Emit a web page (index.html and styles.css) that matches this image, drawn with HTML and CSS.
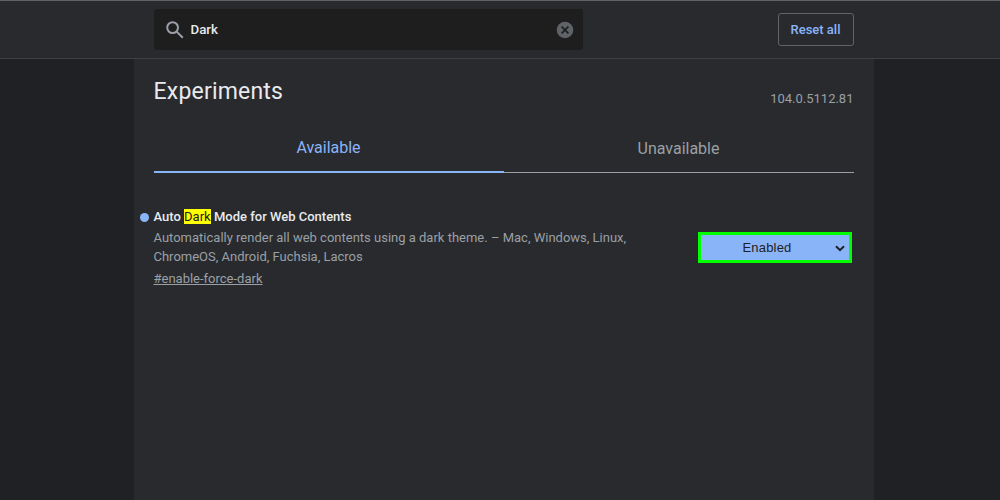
FILE: index.html
```html
<!DOCTYPE html>
<html lang="en">
<head>
    <meta charset="utf-8">
    <title>Experiments</title>
    <meta name="viewport" content="width=device-width, initial-scale=1.0">
    <link rel="stylesheet" href="styles.css">
</head>
<body>
    <header>
        <div class="toolbar">
            <div class="search-box">
                <svg class="search-icon" viewBox="0 0 18 18">
                    <circle cx="6.6" cy="6.6" r="5.4"/>
                    <path d="M10.6 10.6L16.8 16.8"/>
                </svg>
                <input type="text" id="search" value="Dark" aria-label="Search flags" spellcheck="false">
                <button class="clear" type="button" aria-label="Clear search">
                    <svg viewBox="0 0 18 18">
                        <circle cx="9" cy="9" r="8.3"/>
                        <path d="M5.6 5.6L12.4 12.4M12.4 5.6L5.6 12.4"/>
                    </svg>
                </button>
            </div>
            <button class="reset" type="button">Reset all</button>
        </div>
    </header>

    <main class="container">
        <div class="title-row">
            <h1>Experiments</h1>
            <span class="version">104.0.5112.81</span>
        </div>

        <div class="tabs">
            <button class="tab selected" type="button">Available</button>
            <button class="tab" type="button">Unavailable</button>
        </div>

        <div class="experiment">
            <div class="details">
                <h2>Auto <mark>Dark</mark> Mode for Web Contents</h2>
                <p>Automatically render all web contents using a dark theme. – Mac, Windows, Linux, ChromeOS, Android, Fuchsia, Lacros</p>
                <a href="#enable-force-dark">#enable-force-dark</a>
            </div>
            <div class="select-box">
                <select aria-label="Auto Dark Mode">
                    <option>Default</option>
                    <option selected>Enabled</option>
                    <option>Disabled</option>
                </select>
                <svg class="arrow" viewBox="0 0 10 7">
                    <path d="M1 1.2L5 5.2L9 1.2"/>
                </svg>
            </div>
        </div>
    </main>
</body>
</html>
```

FILE: styles.css
```css
*{
  box-sizing: border-box;
}
body{
  margin: 0;
  height: 100vh;
  display: flex;
  flex-direction: column;
  overflow: hidden;
  background-color: #202124;
  color: #e8eaed;
  font-family: Roboto, sans-serif;
  font-size: 13px;
}
button, input, select{
  font-family: inherit;
  margin: 0;
}
header{
  height: 59px;
  flex-shrink: 0;
  background-color: #292a2d;
  border-top: 1px solid #5f6368;
  border-bottom: 1px solid #3f4042;
}
.toolbar{
  width: 700px;
  margin-left: 154px;
  padding-top: 8px;
  display: flex;
  justify-content: space-between;
  align-items: center;
}
.search-box{
  width: 429px;
  height: 41px;
  padding: 0 9px 0 12px;
  display: flex;
  align-items: center;
  background-color: #1e1e1f;
  border-radius: 3px;
}
.search-icon{
  width: 18px;
  height: 18px;
  flex-shrink: 0;
  fill: none;
  stroke: #9aa0a6;
  stroke-width: 2;
}
.search-box input{
  flex: 1;
  padding: 0 0 1px 6.5px;
  border: none;
  outline: none;
  background: none;
  color: #e8eaed;
  font-size: 13.3px;
  font-weight: 500;
}
.clear{
  width: 18px;
  height: 18px;
  padding: 0;
  border: none;
  background: none;
}
.clear svg{
  display: block;
}
.clear circle{
  fill: #5f6368;
}
.clear path{
  stroke: #1e1e1f;
  stroke-width: 1.7;
}
.reset{
  width: 76px;
  height: 33px;
  padding: 0 1px 0 0;
  background: none;
  border: 1px solid #5f6368;
  border-radius: 3px;
  color: #8ab4f8;
  font-size: 13px;
  font-weight: 500;
}
.container{
  width: 740px;
  margin-left: 134px;
  padding: 0 20px;
  flex: 1;
  background-color: #292a2d;
}
.title-row{
  height: 65px;
  display: flex;
  justify-content: space-between;
}
h1{
  margin: 19px 0 0 -0.5px;
  font-size: 23px;
  font-weight: 400;
  line-height: 27px;
  letter-spacing: 0.2px;
}
.version{
  margin-top: 32px;
  margin-right: 0.5px;
  line-height: 16px;
  color: #9aa0a6;
}
.tabs{
  display: flex;
}
.tab{
  flex: 1;
  height: 49px;
  padding: 0 1px 0 0;
  background: none;
  border: none;
  border-bottom: 1px solid #9aa0a6;
  color: #9aa0a6;
  font-size: 16px;
}
.tab.selected{
  border-bottom: 2px solid #8ab4f8;
  color: #8ab4f8;
}
.experiment{
  margin-top: 35px;
  padding-right: 2px;
  display: flex;
  justify-content: space-between;
}
.details{
  width: 500px;
  margin-left: -0.5px;
}
h2{
  margin: 0;
  font-size: 13px;
  font-weight: 500;
  line-height: 17px;
}
/* blue dot for a changed flag, hangs outside the text column */
h2::before{
  content: "";
  float: left;
  width: 9px;
  height: 9px;
  margin: 5px 4.5px 0 -13.5px;
  border-radius: 50%;
  background-color: #8ab4f8;
}
mark{
  background-color: #ff0;
  color: #202124;
  font-weight: 400;
}
.details p{
  margin: 3px 0 4px;
  color: #9aa0a6;
  line-height: 19px;
}
.details a{
  display: inline-block;
  line-height: 18px;
  color: #9aa0a6;
}
.select-box{
  position: relative;
  width: 154px;
  height: 31px;
  margin-top: 24px;
}
.select-box select{
  width: 100%;
  height: 100%;
  padding: 0 16px 0 0;
  appearance: none;
  border: 3px solid #0f0;
  border-radius: 0;
  background-color: #8ab4f8;
  color: #202124;
  font-family: "Liberation Sans", Arial, sans-serif;
  font-size: 13px;
  letter-spacing: 0.2px;
  text-align: center;
  text-align-last: center;
}
.arrow{
  position: absolute;
  right: 7px;
  top: 13px;
  width: 10px;
  height: 7px;
  fill: none;
  stroke: #202124;
  stroke-width: 2;
  pointer-events: none;
}
```
